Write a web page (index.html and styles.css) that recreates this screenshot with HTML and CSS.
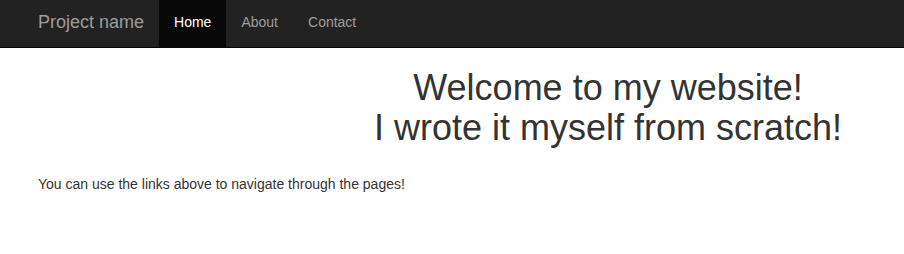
FILE: index.html
```html
<!DOCTYPE html>
<html lang="en">
<head>
<meta charset="utf-8">
<title>Project name</title>
<link rel="stylesheet" href="styles.css">
</head>
<body>
<nav class="navbar">
  <div class="navbar-inner">
    <a class="brand" href="#">Project name</a>
    <ul class="nav">
      <li><a class="active" href="#">Home</a></li>
      <li><a href="#">About</a></li>
      <li><a href="#">Contact</a></li>
    </ul>
  </div>
</nav>
<main class="content">
  <h1 class="title">Welcome to my website!<br>I wrote it myself from scratch!</h1>
  <p class="lead-text">You can use the links above to navigate through the pages!</p>
</main>
</body>
</html>
```
FILE: styles.css
```css
* { box-sizing: border-box; }
html, body { margin: 0; padding: 0; }
body {
  font-family: "Liberation Sans", Arial, Helvetica, sans-serif;
  font-size: 14px;
  line-height: 20px;
  color: #333;
  background: #fff;
}
.navbar {
  background: #222;
  border-bottom: 1px solid #080808;
}
.navbar-inner {
  display: flex;
  align-items: stretch;
  padding-left: 23px;
  height: 47px;
}
.brand {
  display: block;
  padding: 0 15px;
  font-size: 18px;
  line-height: 45px;
  color: #9d9d9d;
  text-decoration: none;
}
.nav {
  display: flex;
  list-style: none;
  margin: 0;
  padding: 0;
}
.nav a {
  display: block;
  padding: 0 15px;
  line-height: 45px;
  height: 47px;
  color: #9d9d9d;
  text-decoration: none;
}
.nav a.active {
  background: #080808;
  color: #fff;
}
.content {
  padding: 0 38px;
}
.title {
  margin: 20px 0 0 312px;
  font-size: 36px;
  font-weight: 500;
  line-height: 1.1;
  text-align: center;
}
.lead-text {
  margin: 27px 0 0;
}
```
